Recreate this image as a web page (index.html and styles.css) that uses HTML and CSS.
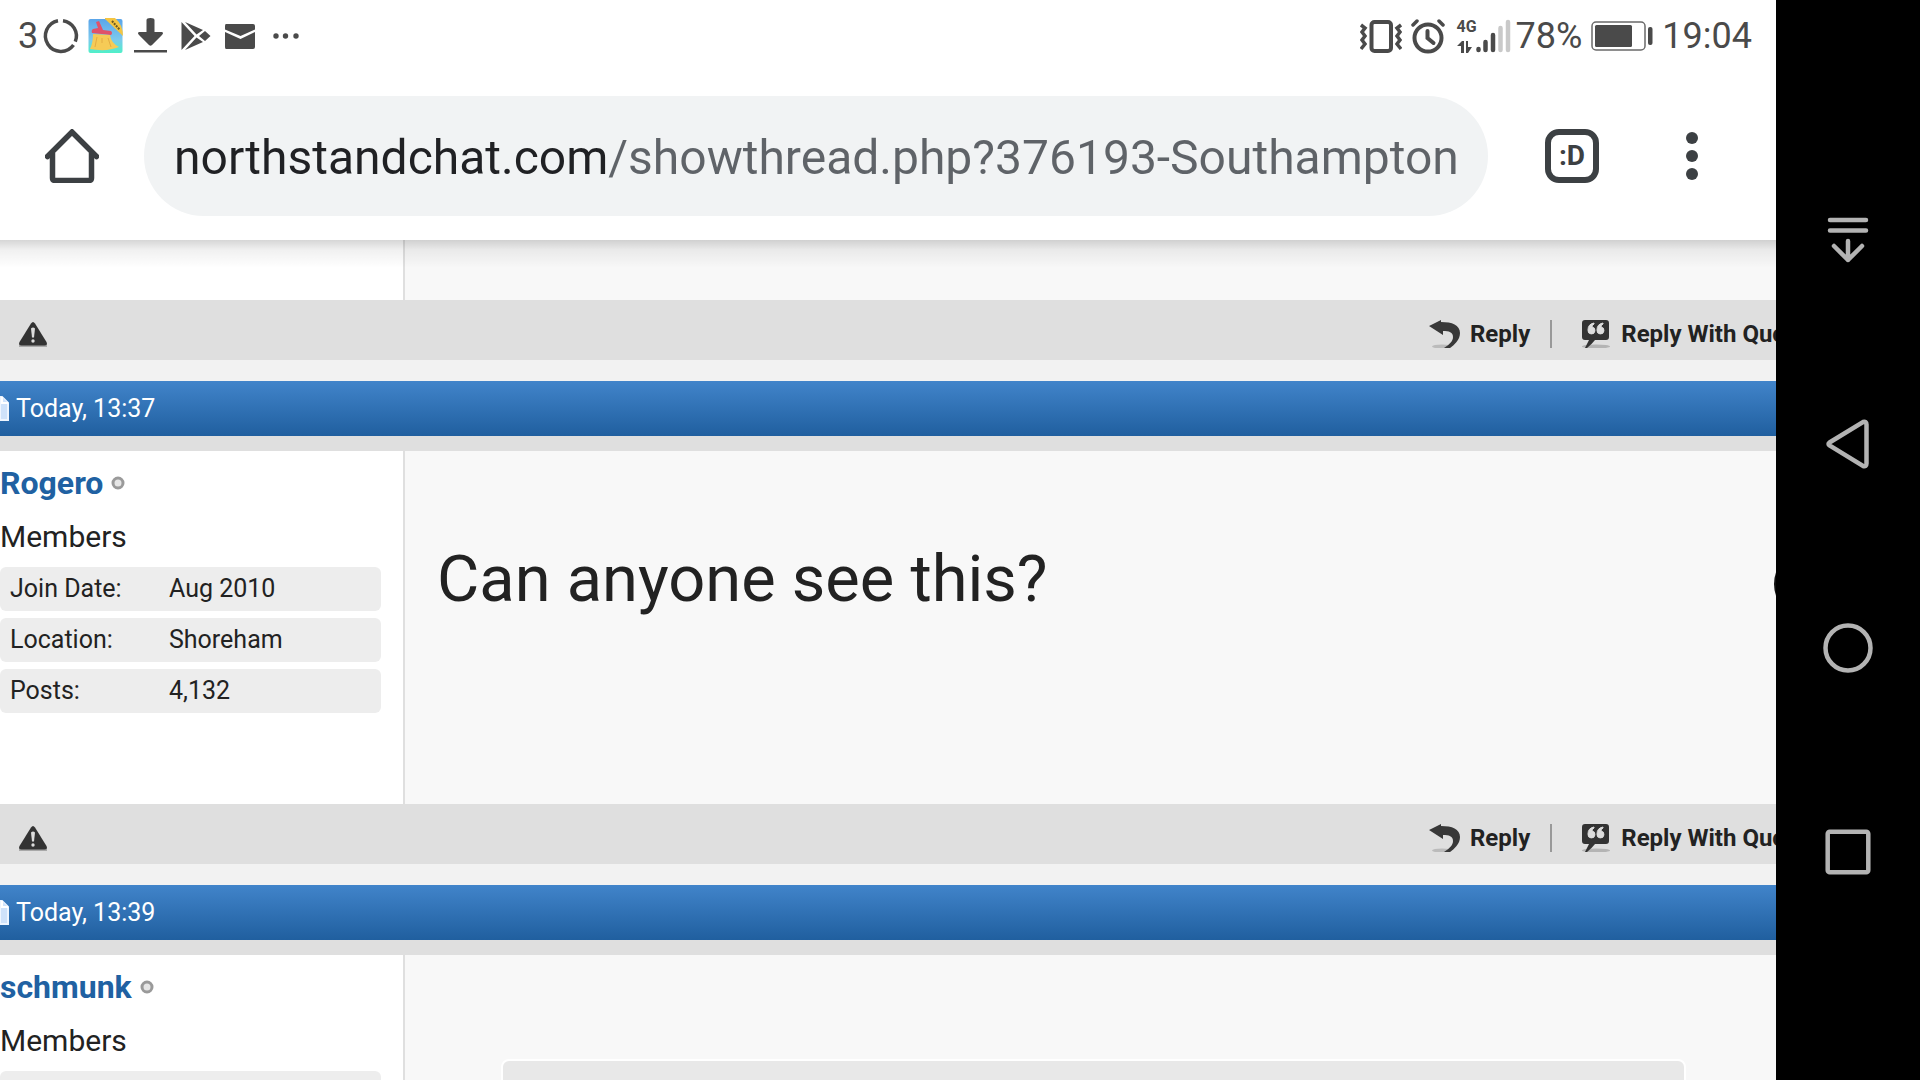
FILE: index.html
```html
<!DOCTYPE html>
<html lang="en">
<head>
    <meta charset="UTF-8">
    <meta name="viewport" content="width=device-width, initial-scale=1.0">
    <title>North Stand Chat</title>
    <link rel="stylesheet" href="styles.css">
</head>
<body>
    <!-- shared post icons -->
    <svg class="sprite" width="0" height="0">
        <symbol id="warn" viewBox="0 0 30 28">
            <path d="M1 26h28" stroke="#a8a8a8" stroke-width="2"/>
            <path d="M13 3.500q2-3 4 0l11.500 18.500q1.500 3.500-2 3.500h-23q-3.500 0-2-3.500z" fill="#333"/>
            <path d="M13 8.500q2-2 4 0l-1 9h-2z" fill="#ddd"/>
            <circle cx="15" cy="21" r="1.700" fill="#ddd"/>
        </symbol>
        <symbol id="reply" viewBox="0 0 32 28">
            <ellipse cx="13" cy="26.500" rx="10" ry="2" fill="#bbb"/>
            <path d="M0 6 12 0v2c11 0 19 3 19 11 0 7-6 12-10 15h-6c6-4 9-7 9-11 0-5-4-6-10-6v4z" fill="#383838"/>
        </symbol>
        <symbol id="quote" viewBox="0 0 30 28">
            <ellipse cx="15" cy="26.500" rx="14" ry="2" fill="#b4b4b4"/>
            <path d="M4 0h21q3 0 3 3v14q0 3-3 3H14q-3 4-8 8H4l4-8H4q-3 0-3-3V3q0-3 3-3z" fill="#333"/>
            <path d="M13 3q-6 1-6 7a3.500 3.500 0 1 0 4-3q0-2 2-3zM22 3q-6 1-6 7a3.500 3.500 0 1 0 4-3q0-2 2-3z" fill="#ddd" stroke="#ddd"/>
        </symbol>
        <symbol id="page" viewBox="0 0 10 26">
            <path d="M0 1h2l6 6v17H0z" fill="#cfe2fa" stroke="#eef5ff" stroke-width="2"/>
            <path d="M2 1v6h6" fill="#cfe2fa" stroke="#fff" stroke-width="2"/>
        </symbol>
        <symbol id="offline" viewBox="0 0 14 14">
            <circle cx="7" cy="7" r="5" fill="#e6e6e6" stroke="#9a9a9a" stroke-width="3"/>
        </symbol>
    </svg>

    <div class="screen">
        <div class="status">
            <div class="status-left">
                <span>3</span>
                <svg class="notif" viewBox="0 0 45 36"><g fill="none" stroke="#4a4a4a" stroke-width="3.500"><path d="M25 2.700a15.500 15.500 0 0 1 12.300 21"/><path d="M35.500 27A15.500 15.500 0 1 1 20 2.700"/></g></svg>
                <svg class="notif" viewBox="0 0 45 36">
                    <defs><linearGradient id="sky" x2="0" y2="1"><stop offset="0" stop-color="#5aa5ea"/><stop offset=".6" stop-color="#7cc9ee"/><stop offset="1" stop-color="#4ff0c8"/></linearGradient></defs>
                    <rect x="5.500" y="1" width="34" height="34" rx="2" fill="url(#sky)"/>
                    <path d="M22 0h10q8 7 8 18L22 1z" fill="#f4c542"/>
                    <path d="m29 3 8 9" stroke="#6b5a20" stroke-width="2" stroke-dasharray="2 1"/>
                    <path d="m13 4 3-1 4 9 8 1q2 2 0 4L9 15q-1-3 1-4l5-1z" fill="#e0526a"/>
                    <path d="m10 16 17 1q1 8 9 12-12 5-29 2 3-6 3-15z" fill="#f6cb56"/>
                    <path d="m14 19-2 10m7-9v5m6-5 3 9" stroke="#e3ac42" fill="none"/>
                </svg>
                <svg class="notif" viewBox="0 0 45 36"><path d="M18.500 2q0-2 4-2t4 2v12H34q2 1 0 3L24 27q-1.500 1.500-3 0L11 17q-2-2 0-3h7.500zM6 32h33v2.500H6z" fill="#4a4a4a"/></svg>
                <svg class="notif" viewBox="0 0 45 36"><path d="M8.500 4v28l13-14zM12 4l18 8-6.500 4.500zM12 32l18-8-6.500-4.500zM32 13l5.500 5-5.500 5-6-5z" fill="#4a4a4a"/></svg>
                <svg class="notif" viewBox="0 0 45 36"><path d="M8 6h27q2 0 2 2v3.500L22.500 18 7 11.500V8q0-2 1-2zM7 14l15.500 7L37 14v15q0 2-2 2H8q-1 0-1-2z" fill="#4a4a4a"/></svg>
                <svg class="notif" viewBox="0 0 45 36"><g fill="#4a4a4a"><circle cx="13" cy="18" r="2.700"/><circle cx="22.500" cy="18" r="2.700"/><circle cx="33" cy="18" r="2.700"/></g></svg>
            </div>
            <div class="status-right">
                <svg width="42" height="36" viewBox="0 0 42 36"><g fill="none" stroke="#4a4a4a" stroke-width="3.500"><rect x="11.500" y="4" width="19.500" height="29" rx="3" stroke-width="4"/><path d="m1 7 4 3-3 4 3 4-3 4 3 4-4 5M41 7l-4 3 3 4-3 4 3 4-3 4 4 5"/></g></svg>
                <svg width="34" height="36" viewBox="0 0 34 36"><g fill="none" stroke="#4a4a4a" stroke-width="4" stroke-linecap="round"><circle cx="17" cy="20" r="13.500"/><path d="m2 7 4-4m26 4-4-4" stroke-width="3.500"/><path d="M16.500 13v7l6 5"/></g></svg>
                <div class="signal">
                    <div class="network">
                        <span>4G</span>
                        <svg width="16" height="12" viewBox="0 0 16 12"><path d="M4 12V5H0l5-5h2v12zM9 0h2v6h4l-4 6H9z" fill="#4a4a4a"/></svg>
                    </div>
                    <svg width="35" height="34" viewBox="0 0 35 34"><g stroke-width="4.500" stroke-linecap="round"><path d="M2.500 30v1M9.500 23v8M17 16v15" stroke="#4a4a4a"/><path d="M24.500 9v22M32 3v28" stroke="#c9c9c9"/></g></svg>
                </div>
                <span class="percent">78%</span>
                <svg width="62" height="30" viewBox="0 0 62 30"><rect x="1" y="1" width="53" height="28" rx="4" fill="none" stroke="#6a6a6a" stroke-width="1.500"/><rect x="4" y="4" width="37" height="22" rx="1.500" fill="#4a4a4a"/><rect x="57" y="6" width="4.500" height="18" rx="2" fill="#4a4a4a"/></svg>
                <span class="clock">19:04</span>
            </div>
        </div>

        <div class="toolbar">
            <button class="tool home" type="button" aria-label="Home">
                <svg width="54" height="54" viewBox="0 0 54 54"><path d="M7.500 24v25q0 2.500 2.500 2.500h34q2.500 0 2.500-2.500V24" fill="none" stroke="#3c4043" stroke-width="5.500"/><path d="M2.500 27.500 27 3l24.500 24.500" fill="none" stroke="#3c4043" stroke-width="5.500" stroke-linecap="round"/></svg>
            </button>
            <div class="omnibox">
                <input class="url" type="text" aria-label="Address" value="northstandchat.com/showthread.php?376193-Southampton-">
            </div>
            <button class="tool tabs" type="button" aria-label="Tabs"><span class="tab-count">:D</span></button>
            <button class="tool menu" type="button" aria-label="Menu">
                <svg width="12" height="48" viewBox="0 0 12 48"><g fill="#3c4043"><circle cx="6" cy="6" r="6"/><circle cx="6" cy="24" r="6"/><circle cx="6" cy="42" r="6"/></g></svg>
            </button>
        </div>

        <div class="forum">
            <div class="thread">
                <div class="post">
                    <div class="post-body post-end">
                        <div class="user"></div>
                        <div class="content"></div>
                    </div>
                    <div class="post-foot">
                        <a href="#" aria-label="Report post"><svg width="30" height="28"><use href="#warn"/></svg></a>
                        <div class="actions">
                            <a href="#"><svg width="32" height="28"><use href="#reply"/></svg>Reply</a>
                            <span class="divider"></span>
                            <a href="#"><svg width="32" height="28"><use href="#quote"/></svg>Reply With Quote</a>
                        </div>
                    </div>
                </div>

                <div class="post">
                    <div class="post-head"><svg width="10" height="26"><use href="#page"/></svg>Today, 13:37</div>
                    <div class="post-body">
                        <div class="user">
                            <div class="name"><a href="#">Rogero</a><svg width="14" height="14"><use href="#offline"/></svg></div>
                            <div class="rank">Members</div>
                            <dl class="stats">
                                <div class="stat"><dt>Join Date:</dt><dd>Aug 2010</dd></div>
                                <div class="stat"><dt>Location:</dt><dd>Shoreham</dd></div>
                                <div class="stat"><dt>Posts:</dt><dd>4,132</dd></div>
                            </dl>
                        </div>
                        <div class="content">
                            <p class="message">Can anyone see this?</p>
                        </div>
                    </div>
                    <div class="post-foot">
                        <a href="#" aria-label="Report post"><svg width="30" height="28"><use href="#warn"/></svg></a>
                        <div class="actions">
                            <a href="#"><svg width="32" height="28"><use href="#reply"/></svg>Reply</a>
                            <span class="divider"></span>
                            <a href="#"><svg width="32" height="28"><use href="#quote"/></svg>Reply With Quote</a>
                        </div>
                    </div>
                </div>

                <div class="post">
                    <div class="post-head"><svg width="10" height="26"><use href="#page"/></svg>Today, 13:39</div>
                    <div class="post-body">
                        <div class="user">
                            <div class="name"><a href="#">schmunk</a><svg width="14" height="14"><use href="#offline"/></svg></div>
                            <div class="rank">Members</div>
                            <dl class="stats">
                                <div class="stat"></div>
                            </dl>
                        </div>
                        <div class="content">
                            <div class="quoted"></div>
                        </div>
                    </div>
                </div>
            </div>
            <div class="bubble"></div>
        </div>
    </div>

    <div class="navbar">
        <button type="button" aria-label="Notifications"><svg width="50" height="50" viewBox="0 0 50 50"><g fill="none" stroke="#b3b3b3" stroke-width="4.500" stroke-linecap="round" stroke-linejoin="round"><path d="M7 5h36M7 15.500h36M25 26v19M11 31l14 14 14-14"/></g></svg></button>
        <button type="button" aria-label="Back"><svg width="50" height="50" viewBox="0 0 50 50"><path d="M6.500 23.500 40 3q3.500-1 3.500 2.500v39Q43.500 48 40 47L6.500 26.500q-2-1.500 0-3z" fill="none" stroke="#b3b3b3" stroke-width="4.500"/></svg></button>
        <button type="button" aria-label="Home screen"><svg width="50" height="50" viewBox="0 0 50 50"><circle cx="25" cy="25" r="22.500" fill="none" stroke="#b3b3b3" stroke-width="4.500"/></svg></button>
        <button type="button" aria-label="Recent apps"><svg width="50" height="50" viewBox="0 0 50 50"><rect x="4.700" y="4.700" width="40.600" height="40.600" rx="2" fill="none" stroke="#b3b3b3" stroke-width="4.500"/></svg></button>
    </div>
</body>
</html>
```
FILE: styles.css
```css
* {
    box-sizing: border-box;
}
body {
    margin: 0;
    height: 100vh;
    display: flex;
    overflow: hidden;
    background-color: #fff;
    color: #222;
    font-family: Roboto, sans-serif;
}
svg {
    display: block;
    flex: none;
}
button {
    border: 0;
    padding: 0;
    background: none;
    font-family: inherit;
    display: flex;
    align-items: center;
    justify-content: center;
}
a {
    color: inherit;
    text-decoration: none;
}
.sprite {
    position: absolute;
}
.screen {
    flex: 1;
    min-width: 0;
    display: flex;
    flex-direction: column;
    overflow: hidden;
}

/* status bar */
.status {
    height: 72px;
    flex: none;
    display: flex;
    justify-content: space-between;
    padding: 0 24px 0 18px;
    font-size: 36px;
    line-height: 76px;
    color: #4a4a4a;
}
.status-left,
.status-right {
    display: flex;
    align-items: center;
}
.notif {
    width: 45px;
    height: 36px;
}
.status-right {
    gap: 9px;
}
.signal {
    display: flex;
    gap: 2px;
    margin-left: 3px;
}
.network {
    width: 17px;
    display: flex;
    flex-direction: column;
    justify-content: space-between;
    font-size: 16px;
    font-weight: bold;
    line-height: 16px;
}
.percent {
    line-height: 70px;
    margin-left: -4px;
}

/* browser toolbar */
.toolbar {
    position: relative;
    z-index: 1;
    height: 168px;
    flex: none;
    display: flex;
    align-items: center;
    padding-right: 48px;
    background-color: #fff;
}
.toolbar::after {
    content: "";
    position: absolute;
    top: 100%;
    left: 0;
    right: 0;
    height: 28px;
    background: linear-gradient(rgba(0, 0, 0, .16), rgba(0, 0, 0, .06) 35%, rgba(0, 0, 0, 0));
}
.tool {
    height: 120px;
    color: #3c4043;
}
.home {
    width: 144px;
}
.tabs {
    width: 168px;
}
.menu {
    width: 72px;
}
.omnibox {
    flex: 1;
    min-width: 0;
    height: 120px;
    padding: 0 30px;
    border-radius: 60px;
    background-color: #f1f3f4;
}
.url {
    display: block;
    width: 100%;
    height: 120px;
    padding: 2px 0 0;
    border: 0;
    outline: 0;
    font-family: inherit;
    font-size: 48px;
    /* host is darker than the path */
    color: transparent;
    background: linear-gradient(to right, #202124 434px, #5f6368 434px);
    -webkit-background-clip: text;
    background-clip: text;
}
.tab-count {
    width: 54px;
    height: 54px;
    border: 6px solid #3c4043;
    border-radius: 14px;
    font-size: 28px;
    font-weight: bold;
    line-height: 42px;
}

/* thread */
.forum {
    position: relative;
    flex: 1;
    min-height: 0;
    overflow: hidden;
    background-color: #f2f2f2;
}
.thread {
    width: calc(100% + 60px);
}
.post {
    margin-bottom: 21px;
}
.post-head {
    display: flex;
    align-items: center;
    gap: 6px;
    height: 55px;
    background: linear-gradient(#4184ca, #205f9f);
    color: #fff;
    font-size: 25px;
}
.post-body {
    display: flex;
    min-height: 368px;
    border-top: 15px solid #dfdfdf;
    background-color: #f8f8f8;
}
.post-end {
    min-height: 60px;
    border-top: 0;
}
.user {
    width: 405px;
    flex: none;
    padding: 14px 22px 0 0;
    border-right: 2px solid #dfdfdf;
    background-color: #fff;
}
.name,
.rank {
    font-size: 30px;
    line-height: 36px;
}
.name {
    display: flex;
    align-items: center;
    gap: 8px;
    margin-bottom: 18px;
    color: #2061a2;
    font-size: 32px;
    font-weight: bold;
}
.stats {
    margin: 12px 0 0;
    font-size: 25px;
    line-height: 44px;
}
.stat {
    display: flex;
    min-height: 44px;
    margin-bottom: 7px;
    padding-left: 10px;
    border-radius: 6px;
    background-color: #ededed;
}
.stat dt {
    width: 159px;
}
.stat dd {
    margin: 0;
}
.content {
    flex: 1;
    padding: 91px 84px 0 32px;
}
.post-end .user,
.post-end .content {
    padding-top: 0;
}
.message {
    margin: 0;
    font-size: 65px;
    line-height: 75px;
}
.quoted {
    margin: 13px 66px 0 64px;
    height: 120px;
    border: 2px solid #fff;
    border-radius: 8px;
    background-color: #e8e8e8;
}
.post-foot {
    display: flex;
    align-items: center;
    justify-content: space-between;
    height: 60px;
    padding: 8px 29px 0 18px;
    background-color: #dfdfdf;
    font-size: 24px;
    font-weight: bold;
}
.actions,
.actions a {
    display: flex;
    align-items: center;
}
.actions {
    gap: 20px;
}
.actions a {
    gap: 9px;
}
.divider {
    width: 2px;
    height: 28px;
    margin-right: 8px;
    background-color: #999;
}
/* floating button, mostly off the edge */
.bubble {
    position: absolute;
    top: 308px;
    left: calc(100% - 2px);
    width: 72px;
    height: 72px;
    border-radius: 50%;
    background-color: #111;
}

/* phone navigation */
.navbar {
    width: 144px;
    flex: none;
    display: flex;
    flex-direction: column;
    justify-content: center;
    padding-top: 12px;
    background-color: #000;
}
.navbar button {
    height: 204px;
}
```
